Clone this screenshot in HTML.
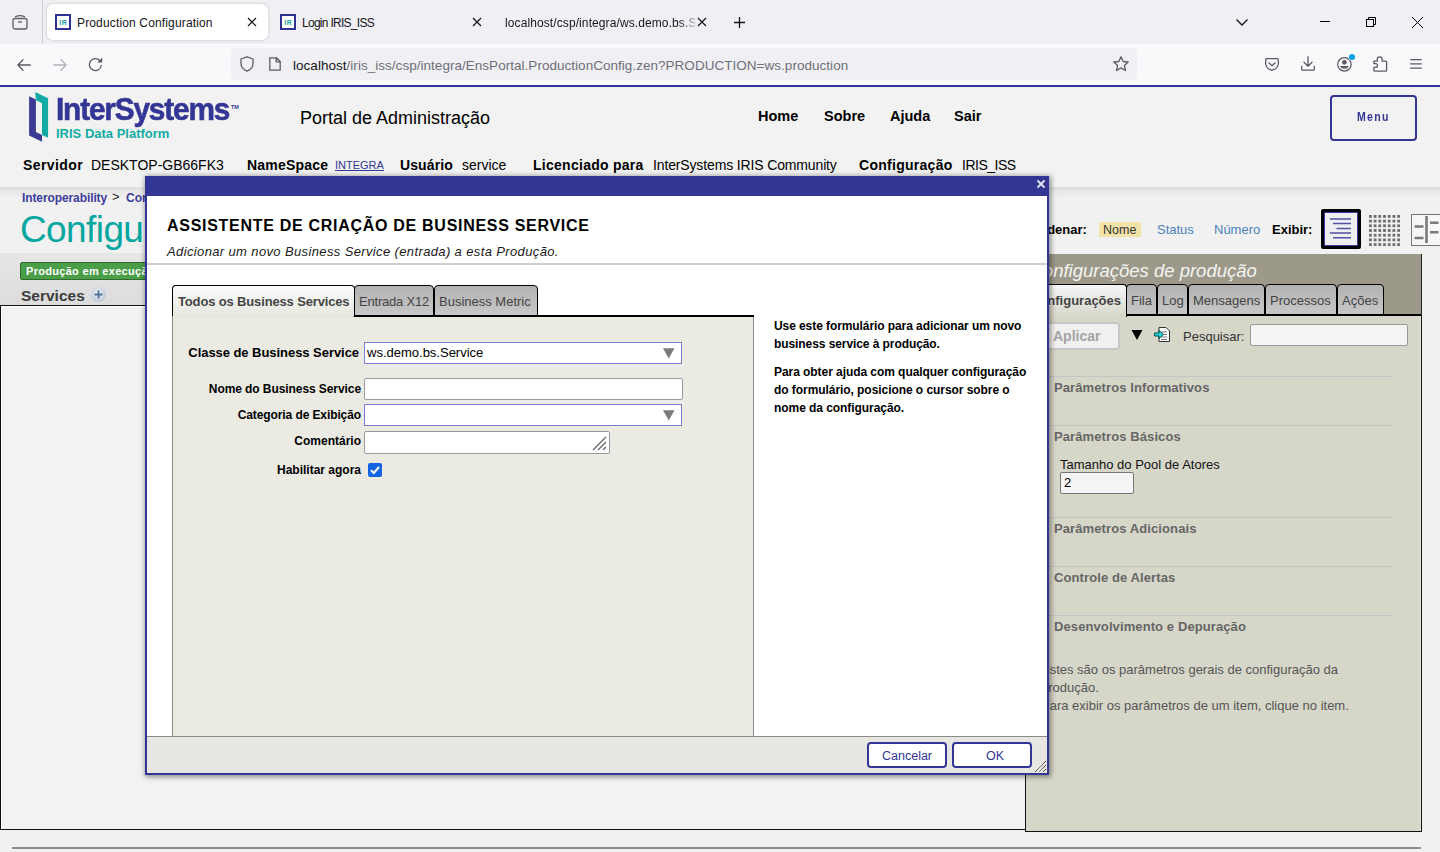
<!DOCTYPE html>
<html><head><meta charset="utf-8">
<style>
*{box-sizing:border-box;margin:0;padding:0}
html,body{width:1440px;height:852px;overflow:hidden;font-family:"Liberation Sans",sans-serif;background:#f1f1f1}
.a{position:absolute;white-space:nowrap;line-height:1.15}
.b{font-weight:bold}
#tabbar{left:0;top:0;width:1440px;height:44px;background:#f0f0f4}
#toolbar{left:0;top:44px;width:1440px;height:41px;background:#f9f9fb}
#blueline{left:0;top:85px;width:1440px;height:2px;background:#333695}
.tabt{font-size:12px;color:#15141a}
svg.ic{position:absolute;overflow:visible}
</style></head>
<body>
<!-- ============ browser chrome ============ -->
<div id="tabbar" class="a">
  <svg class="ic" style="left:12px;top:14px" width="16" height="16" viewBox="0 0 16 16" fill="none" stroke="#5b5b66" stroke-width="1.3"><path d="M3.5 2.6Q8 0.6 12.5 2.6" stroke-linecap="round"/><rect x="1" y="4.5" width="14" height="10.5" rx="2"/><path d="M6 8h4"/></svg>
  <div class="a" style="left:42px;top:0;width:1px;height:44px;background:#cfcfd8"></div>
  <div class="a" style="left:47px;top:4px;width:221px;height:36px;border-radius:6px;background:#fff;box-shadow:0 0 3px rgba(0,0,0,.22)"></div>
  <!-- favicons -->
  <div class="a" style="left:55px;top:14px;width:16px;height:16px;border:2px solid #2e3192;background:#fff"></div>
  <div class="a" style="left:57px;top:19px;width:12px;text-align:center;font-size:7px;color:#19a39a;font-weight:bold;line-height:1;letter-spacing:0.5px;text-indent:0.5px">IR</div>
  <div class="a tabt" style="left:77px;top:17px;letter-spacing:0.15px">Production Configuration</div>
  <svg class="ic" style="left:248px;top:18px" width="8" height="8" viewBox="0 0 8 8" stroke="#15141a" stroke-width="1.2"><path d="M0 0L8 8M8 0L0 8"/></svg>
  <div class="a" style="left:280px;top:14px;width:16px;height:16px;border:2px solid #2e3192;background:#fff"></div>
  <div class="a" style="left:282px;top:19px;width:12px;text-align:center;font-size:7px;color:#19a39a;font-weight:bold;line-height:1;letter-spacing:0.5px;text-indent:0.5px">IR</div>
  <div class="a tabt" style="left:302px;top:17px;letter-spacing:-0.72px">Login IRIS_ISS</div>
  <svg class="ic" style="left:473px;top:18px" width="8" height="8" viewBox="0 0 8 8" stroke="#15141a" stroke-width="1.2"><path d="M0 0L8 8M8 0L0 8"/></svg>
  <div class="a tabt" style="left:505px;top:17px;width:190px;overflow:hidden;letter-spacing:0.1px;-webkit-mask-image:linear-gradient(90deg,#000 92%,rgba(0,0,0,.25))">localhost/csp/integra/ws.demo.bs.Service</div>
  <svg class="ic" style="left:698px;top:18px" width="8" height="8" viewBox="0 0 8 8" stroke="#15141a" stroke-width="1.2"><path d="M0 0L8 8M8 0L0 8"/></svg>
  <svg class="ic" style="left:734px;top:17px" width="11" height="11" viewBox="0 0 11 11" stroke="#15141a" stroke-width="1.3"><path d="M5.5 0V11M0 5.5H11"/></svg>
  <svg class="ic" style="left:1236px;top:19px" width="12" height="7" viewBox="0 0 12 7" fill="none" stroke="#15141a" stroke-width="1.3"><path d="M0.5 0.5L6 6L11.5 0.5"/></svg>
  <div class="a" style="left:1320px;top:21px;width:10px;height:1px;background:#000"></div>
  <svg class="ic" style="left:1366px;top:17px" width="10" height="10" viewBox="0 0 10 10" fill="none" stroke="#000" stroke-width="1"><rect x="0.5" y="2.5" width="7" height="7"/><path d="M2.5 2.5V0.5H9.5V7.5H7.5"/></svg>
  <svg class="ic" style="left:1412px;top:17px" width="11" height="11" viewBox="0 0 11 11" stroke="#000" stroke-width="1"><path d="M0 0L11 11M11 0L0 11"/></svg>
</div>
<div id="toolbar" class="a">
  <svg class="ic" style="left:17px;top:15px" width="14" height="12" viewBox="0 0 14 12" fill="none" stroke="#5b5b66" stroke-width="1.3" stroke-linecap="round" stroke-linejoin="round"><path d="M13.3 6H1M6 0.8L0.9 6L6 11.2"/></svg>
  <svg class="ic" style="left:53px;top:15px" width="14" height="12" viewBox="0 0 14 12" fill="none" stroke="#b3b3ba" stroke-width="1.3" stroke-linecap="round" stroke-linejoin="round"><path d="M0.7 6H13M8 0.8L13.1 6L8 11.2"/></svg>
  <svg class="ic" style="left:88px;top:13px" width="16" height="15" viewBox="0 0 16 15" fill="none" stroke="#5b5b66" stroke-width="1.3" stroke-linecap="round"><path d="M13.3 8.5A6 6 0 1 1 11.6 3.3"/><path d="M14.2 0.6V5.4H9.4Z" fill="#5b5b66" stroke="none"/></svg>
  <div class="a" style="left:231px;top:4px;width:906px;height:32px;background:#f0f0f4;border-radius:4px"></div>
  <svg class="ic" style="left:240px;top:12px" width="14" height="16" viewBox="0 0 14 16" fill="none" stroke="#5b5b66" stroke-width="1.3" stroke-linejoin="round"><path d="M7 0.8L13 3V7.5C13 11.5 10 14 7 15.2C4 14 1 11.5 1 7.5V3Z"/></svg>
  <svg class="ic" style="left:269px;top:13px" width="12" height="14" viewBox="0 0 12 14" fill="none" stroke="#5b5b66" stroke-width="1.3" stroke-linejoin="round"><path d="M0.8 0.8H7.5L11.2 4.5V13.2H0.8Z M7.2 0.8V4.8H11.2"/></svg>
  <div class="a" style="left:293px;top:14px;font-size:13.5px;color:#15141a;letter-spacing:0.03px">localhost<span style="color:#6f6f78">/iris_iss/csp/integra/EnsPortal.ProductionConfig.zen?PRODUCTION=ws.production</span></div>
  <svg class="ic" style="left:1113px;top:12px" width="16" height="16" viewBox="0 0 16 16" fill="none" stroke="#5b5b66" stroke-width="1.3" stroke-linejoin="round"><path d="M8 0.8L10.2 5.5L15.2 6L11.4 9.4L12.5 14.5L8 11.9L3.5 14.5L4.6 9.4L0.8 6L5.8 5.5Z"/></svg>
  <svg class="ic" style="left:1265px;top:14px" width="14" height="13" viewBox="0 0 14 13" fill="none" stroke="#5b5b66" stroke-width="1.3" stroke-linejoin="round" stroke-linecap="round"><path d="M1.6 0.7H12.4C12.9 0.7 13.3 1.1 13.3 1.6V5.6C13.3 9.2 10.5 12 7 12C3.5 12 0.7 9.2 0.7 5.6V1.6C0.7 1.1 1.1 0.7 1.6 0.7Z"/><path d="M4 5L7 7.8L10 5"/></svg>
  <svg class="ic" style="left:1301px;top:12px" width="14" height="15" viewBox="0 0 14 15" fill="none" stroke="#5b5b66" stroke-width="1.3" stroke-linejoin="round" stroke-linecap="round"><path d="M7 0.7V10M3 6.2L7 10.2L11 6.2M0.7 10.5V13C0.7 13.7 1.1 14.2 1.8 14.2H12.2C12.9 14.2 13.3 13.7 13.3 13V10.5"/></svg>
  <svg class="ic" style="left:1337px;top:13px" width="16" height="16" viewBox="0 0 16 16" fill="none" stroke="#5b5b66" stroke-width="1.3"><circle cx="7.4" cy="7.3" r="6.75"/><circle cx="7.4" cy="5.35" r="2.4" fill="#5b5b66" stroke="none"/><path d="M3.2 9H11.6C11.6 10.6 9.7 11.7 7.4 11.7C5.1 11.7 3.2 10.6 3.2 9Z" fill="#5b5b66" stroke="none"/></svg>
  <div class="a" style="left:1349px;top:10px;width:6px;height:6px;border-radius:50%;background:#00a0f0;box-shadow:0 0 0 0.5px #f9f9fb"></div>
  <svg class="ic" style="left:1373px;top:12px" width="15" height="16" viewBox="0 0 15 16" fill="none" stroke="#5b5b66" stroke-width="1.3" stroke-linejoin="round"><path d="M0.9 5.2H4.3V3.2A2.4 2.4 0 0 1 9.1 3.2V5.2H12.6C13.2 5.2 13.6 5.6 13.6 6.2V14.4C13.6 14.8 13.3 15.1 12.9 15.1H1.6C1.2 15.1 0.9 14.8 0.9 14.4V11.4H2.6A1.9 1.9 0 0 0 2.6 7.6H0.9Z"/></svg>
  <svg class="ic" style="left:1410px;top:15px" width="12" height="10" viewBox="0 0 12 10" stroke="#5b5b66" stroke-width="1.2" stroke-linecap="round"><path d="M0.6 0.6H11.4M0.6 4.9H11.4M0.6 9.2H11.4"/></svg>
</div>
<div id="blueline" class="a"></div>

<!-- ============ page ============ -->
<div id="page" class="a" style="left:0;top:87px;width:1440px;height:765px;background:#f1f1f1"></div>
<!-- header shadow -->
<div class="a" style="left:0;top:87px;width:1440px;height:100px;background:#f2f2f2"></div>
<div class="a" style="left:0;top:187px;width:1440px;height:11px;background:linear-gradient(#dcdcdc,#e6e6e6 35%,#f1f1f1)"></div>

<!-- logo -->
<svg class="ic" style="left:24px;top:88px" width="40" height="58" viewBox="0 0 40 58">
  <polygon points="5.1,8.2 11.9,11.6 11.9,43.9 18,46.9 18,53.7 5.1,47.6" fill="#3b3b94"/>
  <polygon points="11.2,4.1 24.1,10.2 24.1,49.7 18,46.9 18,15.3 11.9,12" fill="#12aba4"/>
</svg>
<div class="a b" style="left:56px;top:92px;font-size:31px;color:#333695;-webkit-text-stroke:0.6px #333695;letter-spacing:-1.2px;transform:scaleX(0.96);transform-origin:0 0">InterSystems</div>
<div class="a b" style="left:231px;top:104px;font-size:5.5px;color:#333695">TM</div>
<div class="a b" style="left:56px;top:127px;font-size:13px;color:#12aba4">IRIS Data Platform</div>

<div class="a" style="left:300px;top:108px;font-size:18px;color:#000">Portal de Administração</div>
<div class="a b" style="left:758px;top:108px;font-size:14.5px;color:#000">Home</div>
<div class="a b" style="left:824px;top:108px;font-size:14.5px;color:#000">Sobre</div>
<div class="a b" style="left:890px;top:108px;font-size:14.5px;color:#000">Ajuda</div>
<div class="a b" style="left:954px;top:108px;font-size:14.5px;color:#000">Sair</div>
<div class="a" style="left:1330px;top:95px;width:87px;height:46px;border:2px solid #333695;border-radius:4px"></div>
<div class="a b" style="left:1357px;top:110px;font-size:12.3px;color:#333695;letter-spacing:1.5px;transform:scaleX(0.86);transform-origin:0 0">Menu</div>

<!-- info line -->
<div class="a b" style="left:23px;top:157px;font-size:14px;letter-spacing:0.4px;color:#000">Servidor</div>
<div class="a" style="left:91px;top:157px;font-size:14px;color:#000">DESKTOP-GB66FK3</div>
<div class="a b" style="left:247px;top:157px;font-size:14px;letter-spacing:0.2px;color:#000">NameSpace</div>
<div class="a" style="left:335px;top:159px;font-size:11px;color:#333695;text-decoration:underline">INTEGRA</div>
<div class="a b" style="left:400px;top:157px;font-size:14px;letter-spacing:0.1px;color:#000">Usuário</div>
<div class="a" style="left:462px;top:157px;font-size:14px;color:#000">service</div>
<div class="a b" style="left:533px;top:157px;font-size:14px;letter-spacing:0.27px;color:#000">Licenciado para</div>
<div class="a" style="left:653px;top:157px;font-size:14px;letter-spacing:-0.14px;color:#000">InterSystems IRIS Community</div>
<div class="a b" style="left:859px;top:157px;font-size:14px;letter-spacing:0.28px;color:#000">Configuração</div>
<div class="a" style="left:962px;top:157px;font-size:14px;letter-spacing:-0.5px;color:#000">IRIS_ISS</div>

<!-- breadcrumb + title -->
<div class="a b" style="left:22px;top:192px;font-size:12px;letter-spacing:-0.1px;color:#3d3d9a">Interoperability</div>
<div class="a" style="left:112px;top:190px;font-size:13px;color:#222">&gt;</div>
<div class="a b" style="left:126px;top:192px;font-size:12px;color:#3d3d9a">Configura&ccedil;&atilde;o</div>
<div class="a" style="left:20px;top:209px;font-size:37px;letter-spacing:-0.6px;color:#06a6a0">Configura&ccedil;&atilde;o da Produ&ccedil;&atilde;o</div>

<!-- gray band -->
<div class="a" style="left:0;top:253px;width:1025px;height:52px;background:linear-gradient(#e6e6e6,#dcdcdc)"></div>
<div class="a" style="left:20px;top:262px;width:160px;height:18px;background:#4a9e48;border:1px solid #2f6a2e;border-radius:2px"></div>
<div class="a b" style="left:26px;top:265px;font-size:11px;letter-spacing:0.3px;color:#fff">Produ&ccedil;&atilde;o em execu&ccedil;&atilde;o</div>
<div class="a b" style="left:21px;top:287px;font-size:15.5px;color:#3c3c3c">Services</div>
<div class="a" style="left:91px;top:287px;width:15px;height:15px;border-radius:50%;background:radial-gradient(circle at 45% 40%,#eef2f6,#c3ceda 65%,#9fadbd)"></div>
<svg class="ic" style="left:94px;top:290px" width="9" height="9" viewBox="0 0 9 9" stroke="#4f7396" stroke-width="1.8"><path d="M4.5 0.5V8.5M0.5 4.5H8.5"/></svg>

<!-- left white panel -->
<div class="a" style="left:0;top:305px;width:1026px;height:525px;background:#f2f2f2;border:1px solid #111;box-shadow:inset 1px 1px 0 #fff"></div>
<!-- bottom line -->
<div class="a" style="left:12px;top:847px;width:1409px;height:2px;background:#8e8e8e"></div>

<!-- ordenar row -->
<div class="a b" style="left:1032px;top:223px;font-size:13px;color:#000">Ordenar:</div>
<div class="a" style="left:1099px;top:222px;width:42px;height:15px;background:#f3e3a8"></div>
<div class="a" style="left:1103px;top:223px;font-size:12.5px;color:#333">Nome</div>
<div class="a" style="left:1157px;top:223px;font-size:13px;color:#4a83bd">Status</div>
<div class="a" style="left:1214px;top:223px;font-size:13px;color:#4a83bd">N&uacute;mero</div>
<div class="a b" style="left:1272px;top:223px;font-size:13px;color:#000">Exibir:</div>
<div class="a" style="left:1321px;top:209px;width:40px;height:40px;border:3px solid #000;border-radius:2px;background:#000"></div>
<div class="a" style="left:1324px;top:212px;width:34px;height:34px;border:1px solid #3a3aa0;background:#efeff2"></div>
<svg class="ic" style="left:1329px;top:217px" width="24" height="24" viewBox="0 0 24 24" stroke="#5252a6" stroke-width="1.5"><path d="M0.8 2H22M4 6.6H22M7.5 11.4H22M0.8 16.1H22M4 20.8H22"/></svg>
<svg class="ic" style="left:1369px;top:215px" width="32" height="32" viewBox="0 0 32 32" fill="#6e6e6e"><defs><pattern id="dots" width="4.7" height="4.7" patternUnits="userSpaceOnUse"><rect width="2.8" height="2.8"/></pattern></defs><rect width="32" height="32" fill="url(#dots)"/></svg>
<div class="a" style="left:1411px;top:214px;width:40px;height:32px;border:1px solid #777;background:#f6f6f6"></div>
<svg class="ic" style="left:1411px;top:214px" width="30" height="32" viewBox="0 0 30 32" stroke="#7a7a7a" stroke-width="2.6"><path d="M15.5 2V29M3.5 12.5H12.5M3.5 24H12.5M19 8.8H27.5M19 18.3H27.5"/></svg>
<!-- right settings panel -->
<div class="a" style="left:1025px;top:254px;width:397px;height:578px;background:#d6d6c9;border:1px solid #111;border-top:none;box-shadow:inset -1px 0 0 #e6e6da"></div>
<div class="a" style="left:1025px;top:254px;width:397px;height:62px;background:#9c998b;border-right:1px solid #222"></div>
<div class="a" style="left:1029.5px;top:260px;font-size:18.5px;font-style:italic;color:#f4f4f0">Configura&ccedil;&otilde;es de produ&ccedil;&atilde;o</div>
<!-- tabs -->
<div class="a" style="left:1027px;top:284px;width:100px;height:33px;background:linear-gradient(#f6f6f8,#d6d6c9);border:1.7px solid #000;border-bottom:none;border-radius:4px 4px 0 0"></div>
<div class="a b" style="left:1030px;top:294px;font-size:13px;color:#444">Configura&ccedil;&otilde;es</div>
<div class="a" style="left:1126px;top:284px;width:31px;height:32px;background:linear-gradient(#b2b2b2,#c8c8c8);border:1.7px solid #000;border-radius:4px 4px 0 0"></div>
<div class="a" style="left:1131px;top:294px;font-size:13px;color:#444">Fila</div>
<div class="a" style="left:1157px;top:284px;width:31px;height:32px;background:linear-gradient(#b2b2b2,#c8c8c8);border:1.7px solid #000;border-radius:4px 4px 0 0"></div>
<div class="a" style="left:1162px;top:294px;font-size:13px;color:#444">Log</div>
<div class="a" style="left:1188px;top:284px;width:77px;height:32px;background:linear-gradient(#b2b2b2,#c8c8c8);border:1.7px solid #000;border-radius:4px 4px 0 0"></div>
<div class="a" style="left:1193px;top:294px;font-size:13px;color:#444">Mensagens</div>
<div class="a" style="left:1265px;top:284px;width:72px;height:32px;background:linear-gradient(#b2b2b2,#c8c8c8);border:1.7px solid #000;border-radius:4px 4px 0 0"></div>
<div class="a" style="left:1270px;top:294px;font-size:13px;color:#444">Processos</div>
<div class="a" style="left:1337px;top:284px;width:47px;height:32px;background:linear-gradient(#b2b2b2,#c8c8c8);border:1.7px solid #000;border-radius:4px 4px 0 0"></div>
<div class="a" style="left:1342px;top:294px;font-size:13px;color:#444">A&ccedil;&otilde;es</div>
<div class="a" style="left:1126px;top:314px;width:295px;height:2px;background:#000"></div>

<div class="a" style="left:1038px;top:322px;width:82px;height:28px;background:#f0f0f0;border:2px solid #c6c6c6;border-radius:4px"></div>
<div class="a b" style="left:1053px;top:328px;font-size:14px;color:#a4a4a4">Aplicar</div>
<svg class="ic" style="left:1131px;top:330px" width="12" height="10" viewBox="0 0 12 10"><path d="M0.5 0H11.5L6 10Z" fill="#000"/></svg>
<svg class="ic" style="left:1154px;top:327px" width="16" height="15" viewBox="0 0 16 15"><path d="M5 0.5H12L15.5 4V14.5H5Z" fill="#fff" stroke="#333" stroke-width="1"/><path d="M7 5H13M7 7.5H13M7 10H13M7 12.5H13" stroke="#555" stroke-width="0.8"/><path d="M0.5 6H5V3.5L9.5 7.5L5 11.5V9H0.5Z" fill="#1fd3d8" stroke="#044" stroke-width="0.9"/></svg>
<div class="a" style="left:1183px;top:330px;font-size:13px;color:#333">Pesquisar:</div>
<div class="a" style="left:1250px;top:324px;width:158px;height:22px;background:#f4f4f4;border:1px solid #999;border-radius:2px"></div>

<div class="a" style="left:1026px;top:376px;width:366px;height:1px;background:#c4c4c4"></div>
<div class="a b" style="left:1054px;top:381px;font-size:13px;letter-spacing:0.1px;color:#666">Par&acirc;metros Informativos</div>
<div class="a" style="left:1026px;top:425px;width:366px;height:1px;background:#c4c4c4"></div>
<div class="a b" style="left:1054px;top:430px;font-size:13px;letter-spacing:0.1px;color:#666">Par&acirc;metros B&aacute;sicos</div>
<div class="a" style="left:1060px;top:458px;font-size:13px;color:#111">Tamanho do Pool de Atores</div>
<div class="a" style="left:1060px;top:472px;width:74px;height:22px;background:#f4f4f4;border:1px solid #777;border-radius:2px"></div>
<div class="a" style="left:1064px;top:476px;font-size:13px;color:#000">2</div>
<div class="a" style="left:1026px;top:517px;width:366px;height:1px;background:#c4c4c4"></div>
<div class="a b" style="left:1054px;top:522px;font-size:13px;letter-spacing:0.1px;color:#666">Par&acirc;metros Adicionais</div>
<div class="a" style="left:1026px;top:566px;width:366px;height:1px;background:#c4c4c4"></div>
<div class="a b" style="left:1054px;top:571px;font-size:13px;letter-spacing:0.1px;color:#666">Controle de Alertas</div>
<div class="a" style="left:1026px;top:615px;width:366px;height:1px;background:#c4c4c4"></div>
<div class="a b" style="left:1054px;top:620px;font-size:13px;letter-spacing:0.1px;color:#666">Desenvolvimento e Depura&ccedil;&atilde;o</div>
<div class="a" style="left:1041px;top:661px;font-size:13px;line-height:18px;color:#555">Estes s&atilde;o os par&acirc;metros gerais de configura&ccedil;&atilde;o da<br>produ&ccedil;&atilde;o.<br>Para exibir os par&acirc;metros de um item, clique no item.</div>

<!-- ============ dialog ============ -->
<div id="dlg" class="a" style="left:145px;top:176px;width:904px;height:599px;background:#fff;border:2px solid #333695;border-top:none;box-shadow:1px 1px 5px 1px rgba(0,0,0,.42)">
</div>
<div class="a" style="left:145px;top:176px;width:904px;height:20px;background:#333695;border-radius:0 2px 0 0"></div>
<svg class="ic" style="left:1037px;top:180px" width="8" height="8" viewBox="0 0 8 8" stroke="#e4e4f0" stroke-width="1.9"><path d="M0.5 0.5L7.5 7.5M7.5 0.5L0.5 7.5"/></svg>

<div class="a b" style="left:167px;top:217px;font-size:16px;letter-spacing:0.71px;color:#000">ASSISTENTE DE CRIA&Ccedil;&Atilde;O DE BUSINESS SERVICE</div>
<div class="a" style="left:167px;top:245px;font-size:13px;font-style:italic;letter-spacing:0.37px;color:#1a1a1a">Adicionar um novo Business Service (entrada) a esta Produ&ccedil;&atilde;o.</div>
<div class="a" style="left:147px;top:263px;width:900px;height:2px;background:#cfcfcf"></div>

<!-- dialog tabs -->
<div class="a" style="left:172px;top:285px;width:183px;height:33px;background:linear-gradient(#fbfbfd,#e6e6dd);border:1.7px solid #000;border-bottom:none;border-radius:4px 4px 0 0"></div>
<div class="a b" style="left:178px;top:295px;font-size:13px;letter-spacing:-0.15px;color:#444">Todos os Business Services</div>
<div class="a" style="left:354px;top:285px;width:80px;height:32px;background:linear-gradient(#b2b2b2,#c8c8c8);border:1.7px solid #000;border-radius:4px 4px 0 0"></div>
<div class="a" style="left:359px;top:295px;font-size:13px;letter-spacing:-0.2px;color:#444">Entrada X12</div>
<div class="a" style="left:434px;top:285px;width:104px;height:32px;background:linear-gradient(#b2b2b2,#c8c8c8);border:1.7px solid #000;border-radius:4px 4px 0 0"></div>
<div class="a" style="left:439px;top:295px;font-size:13px;color:#444">Business Metric</div>

<!-- content panel -->
<div class="a" style="left:172px;top:316px;width:582px;height:421px;background:#ebebe4;border:1px solid #8a8a8a;border-bottom:none"></div>
<div class="a" style="left:354px;top:315px;width:400px;height:2px;background:#000"></div>
<div class="a" style="left:173px;top:316px;width:180px;height:2px;background:#e8e8df"></div>

<div class="a b" style="left:160px;width:199px;text-align:right;top:346px;font-size:13px;letter-spacing:-0.05px;color:#000">Classe de Business Service</div>
<div class="a" style="left:364px;top:342px;width:318px;height:22px;background:#fff;border:1px solid #7c7cd8"></div>
<div class="a" style="left:367px;top:346px;font-size:13px;color:#000">ws.demo.bs.Service</div>
<svg class="ic" style="left:663px;top:348px" width="12" height="11" viewBox="0 0 12 11"><path d="M0 0.3H11.5L5.75 10.5Z" fill="#7a7a7a"/></svg>

<div class="a b" style="left:160px;width:201px;text-align:right;top:383px;font-size:12px;letter-spacing:-0.08px;color:#000">Nome do Business Service</div>
<div class="a" style="left:364px;top:378px;width:319px;height:22px;background:#fff;border:1px solid #999;border-radius:2px"></div>

<div class="a b" style="left:160px;width:201px;text-align:right;top:409px;font-size:12px;letter-spacing:-0.1px;color:#000">Categoria de Exibi&ccedil;&atilde;o</div>
<div class="a" style="left:364px;top:404px;width:318px;height:22px;background:#fff;border:1px solid #7c7cd8"></div>
<svg class="ic" style="left:663px;top:410px" width="12" height="11" viewBox="0 0 12 11"><path d="M0 0.3H11.5L5.75 10.5Z" fill="#7a7a7a"/></svg>

<div class="a b" style="left:160px;width:201px;text-align:right;top:435px;font-size:12px;color:#000">Coment&aacute;rio</div>
<div class="a" style="left:364px;top:431px;width:246px;height:23px;background:#fff;border:1px solid #999;border-radius:2px"></div>
<svg class="ic" style="left:592px;top:436px" width="15" height="15" viewBox="0 0 15 15" stroke="#666" stroke-width="1.3"><path d="M14 1L1 14M14 6L6 14M14 11L11 14"/></svg>

<div class="a b" style="left:160px;width:201px;text-align:right;top:464px;font-size:12px;color:#000">Habilitar agora</div>
<div class="a" style="left:368px;top:463px;width:14px;height:14px;background:#1264e2;border-radius:2px"></div>
<svg class="ic" style="left:370px;top:466px" width="10" height="9" viewBox="0 0 10 9" fill="none" stroke="#fff" stroke-width="2"><path d="M1 4.2L3.8 7L9 1"/></svg>

<!-- help text -->
<div class="a b" style="left:774px;top:317px;font-size:12px;letter-spacing:-0.08px;line-height:18px;color:#000">Use este formul&aacute;rio para adicionar um novo<br>business service &agrave; produ&ccedil;&atilde;o.</div>
<div class="a b" style="left:774px;top:363px;font-size:12px;letter-spacing:-0.06px;line-height:18px;color:#000">Para obter ajuda com qualquer configura&ccedil;&atilde;o<br>do formul&aacute;rio, posicione o cursor sobre o<br>nome da configura&ccedil;&atilde;o.</div>

<!-- footer -->
<div class="a" style="left:147px;top:736px;width:900px;height:37px;background:#e8e6e1;border-top:1px solid #8a8a8a"></div>
<div class="a" style="left:867px;top:742px;width:80px;height:26px;background:#fff;border:2px solid #333695;border-radius:4px"></div>
<div class="a" style="left:882px;top:749px;font-size:12.5px;color:#333695">Cancelar</div>
<div class="a" style="left:952px;top:742px;width:80px;height:26px;background:#fff;border:2px solid #333695;border-radius:4px"></div>
<div class="a" style="left:986px;top:749px;font-size:12.5px;color:#333695">OK</div>
<svg class="ic" style="left:1034px;top:760px" width="13" height="13" viewBox="0 0 13 13" stroke="#222" stroke-width="1" stroke-dasharray="1.1 0.5"><path d="M12 1L1 12M12 5L5 12M12 9L9 12"/></svg>
</body></html>
